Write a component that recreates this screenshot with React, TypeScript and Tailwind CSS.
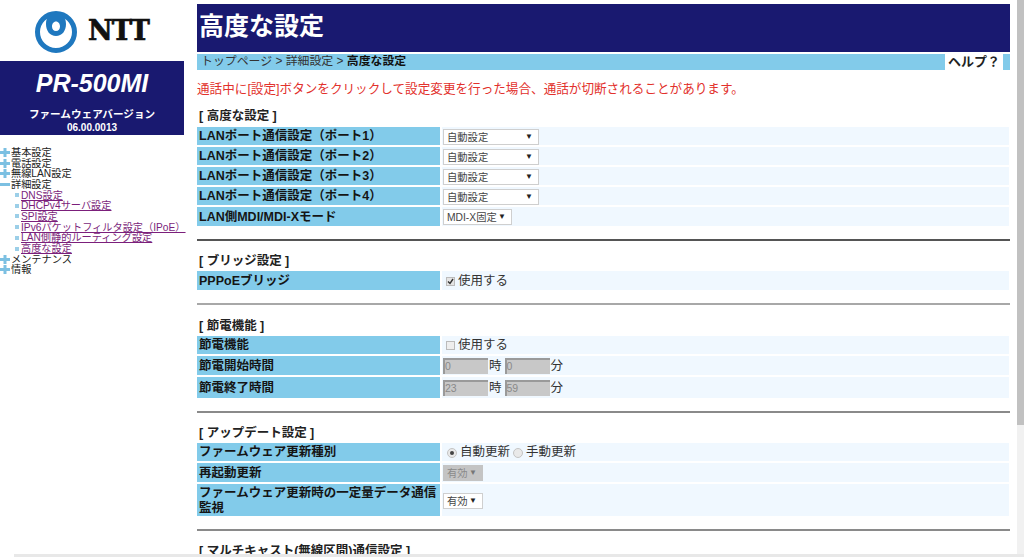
import React from "react";

const jp = { fontFamily: '"Liberation Sans","Noto Sans CJK JP",sans-serif' };

function Plus() {
  return (
    <svg width="10" height="9" viewBox="0 0 10 9" className="shrink-0 mr-[1px]">
      <path d="M3.500 0h3v3H10v3H6.500v3h-3V6H0V3h3.500z" fill="#7cc0e2" />
    </svg>
  );
}
function Minus() {
  return (
    <svg width="10" height="9" viewBox="0 0 10 9" className="shrink-0 mr-[1px]">
      <rect x="0" y="3" width="10" height="3" fill="#7cc0e2" />
    </svg>
  );
}

function TreeTop({ open, children }: { open?: boolean; children: React.ReactNode }) {
  return (
    <div className="flex items-center h-[10.7px] text-[10.2px] leading-[11px] text-[#222]">
      {open ? <Minus /> : <Plus />}
      <span>{children}</span>
    </div>
  );
}
function TreeLink({ children }: { children: React.ReactNode }) {
  return (
    <div className="flex items-center h-[10.7px] pl-[15px] text-[10.2px] leading-[11px] whitespace-nowrap">
      <span className="w-[4px] h-[4px] bg-[#9ccfe8] mr-[2px] shrink-0" />
      <span className="text-[#7b1f7b] underline underline-offset-[1px]">{children}</span>
    </div>
  );
}

function Row({ label, children, h, mb = "mb-[2px]" }: { label: React.ReactNode; children?: React.ReactNode; h: string; mb?: string }) {
  return (
    <div className={`flex ${h} ${mb} mr-[1px]`}>
      <div className="w-[243px] shrink-0 bg-[#82cbea] flex items-center pl-[2px] pt-[1px] text-[12.5px] leading-[15px] font-bold text-[#151515]">
        {label}
      </div>
      <div className="ml-[2px] flex-1 bg-[#f0f8ff] flex items-center pl-[1px] pt-[1px] text-[12.5px] text-[#333]">{children}</div>
    </div>
  );
}

function Sel({ w, children, disabled }: { w: string; children: React.ReactNode; disabled?: boolean }) {
  return (
    <div
      className={`${w} h-[16px] flex items-center justify-between pl-[3px] pr-[5px] text-[10.3px] border ${
        disabled ? "bg-[#c4c4c4] border-[#c4c4c4] text-[#8a8a8a]" : "bg-white border-[#cfcfcf] text-[#444]"
      }`}
    >
      <span className="whitespace-nowrap pt-[2px]">{children}</span>
      <span className={`text-[8px] ${disabled ? "text-[#777]" : "text-[#222]"}`}>▼</span>
    </div>
  );
}

function TimeBox({ v }: { v: string }) {
  return (
    <div className="w-[45px] h-[16px] -mt-[1px] bg-[#c8c8c8] border-t-2 border-l-2 border-t-[#9a9a9a] border-l-[#9a9a9a] text-[10.5px] leading-[13px] text-[#8a8a8a]">
      {v}
    </div>
  );
}

function Title({ children, mt }: { children: React.ReactNode; mt: string }) {
  return <div className={`${mt} h-[14px] pt-[1px] pl-[2px] text-[12.5px] leading-[14px] font-bold text-[#222] whitespace-nowrap`}>{children}</div>;
}

function Rule({ mt, color = "bg-[#8a8a8a]" }: { mt: string; color?: string }) {
  return <div className={`${mt} h-[2px] ${color}`} />;
}

function Tick() {
  return (
    <span className="w-[9px] h-[9px] bg-[#e4e4e4] border border-[#bbb] flex items-center justify-center mr-[3px] ml-[3px]">
      <svg width="7" height="7" viewBox="0 0 7 7"><path d="M1 3.500l2 2 3-4.500" fill="none" stroke="#333" strokeWidth="1.4" /></svg>
    </span>
  );
}

function Radio({ on }: { on?: boolean }) {
  return (
    <span className="w-[10px] h-[10px] rounded-full bg-[#e9e9e9] border border-[#c4c4c4] flex items-center justify-center">
      {on && <span className="w-[4px] h-[4px] rounded-full bg-[#444]" />}
    </span>
  );
}

export default function App() {
  return (
    <div style={jp} className="relative w-[1024px] h-[557px] overflow-hidden bg-white flex">
      <aside className="w-[184px] shrink-0">
        <div className="h-[61px] flex items-center pl-[34px] gap-[10px]">
          <svg width="44" height="44" viewBox="0 0 44 44" className="mt-[3px]">
            <circle cx="22" cy="22" r="18.500" fill="none" stroke="#1f78bf" strokeWidth="5" />
            <path fillRule="evenodd" d="M22 2c6 0 10 5 10 12s-4 12-10 12-10-5-10-12S16 2 22 2zm0 9.500c-2.500 0-4 2.500-4 5s1.500 4.500 4 4.500 4-2 4-4.500-1.500-5-4-5z" fill="#1f78bf" />
          </svg>
          <span style={{ fontFamily: '"DejaVu Serif",serif' }} className="text-[27px] leading-none font-black text-[#111] tracking-[-1px] [-webkit-text-stroke:0.7px_#111]">
            NTT
          </span>
        </div>
        <div className="h-[74px] bg-[#191970] text-white flex flex-col items-center">
          <div className="mt-[8px] text-[25px] leading-[29px] italic font-bold">PR-500MI</div>
          <div className="mt-[9px] text-[10.6px] leading-[14px] font-bold whitespace-nowrap">ファームウェアバージョン</div>
          <div className="text-[10px] leading-[14px] font-bold">06.00.0013</div>
        </div>
        <nav className="mt-[12px]">
          <TreeTop>基本設定</TreeTop>
          <TreeTop>電話設定</TreeTop>
          <TreeTop>無線LAN設定</TreeTop>
          <TreeTop open>詳細設定</TreeTop>
          <TreeLink>DNS設定</TreeLink>
          <TreeLink>DHCPv4サーバ設定</TreeLink>
          <TreeLink>SPI設定</TreeLink>
          <TreeLink>IPv6パケットフィルタ設定（IPoE）</TreeLink>
          <TreeLink>LAN側静的ルーティング設定</TreeLink>
          <TreeLink>高度な設定</TreeLink>
          <TreeTop>メンテナンス</TreeTop>
          <TreeTop>情報</TreeTop>
        </nav>
      </aside>

      <main className="ml-[13px] w-[813px] shrink-0 pt-[4px]">
        <h1 className="h-[48px] bg-[#191970] text-white text-[25px] font-bold flex items-center pl-[2px] pb-[2px]">高度な設定</h1>
        <div className="mt-[2px] h-[16px] bg-[#82cbea] flex items-center text-[11.9px] text-[#333]">
          <div className="flex-1 pl-[4px] whitespace-nowrap">
            トップページ &gt; 詳細設定 &gt; <b className="text-[#111]">高度な設定</b>
          </div>
          <div className="w-[58px] h-full bg-white text-center text-[13px] font-bold leading-[16px] text-[#222] whitespace-nowrap">ヘルプ？</div>
          <div className="w-[7px]" />
        </div>
        <p className="mt-[11px] h-[15px] text-[12.6px] leading-[16px] text-[#e2312c] whitespace-nowrap">
          通話中に[設定]ボタンをクリックして設定変更を行った場合、通話が切断されることがあります。
        </p>

        <Title mt="mt-[12px]">[ 高度な設定 ]</Title>
        <div className="mt-[5px]">
          <Row h="h-[18px]" label="LANポート通信設定（ポート1）"><Sel w="w-[96px]">自動設定</Sel></Row>
          <Row h="h-[18px]" label="LANポート通信設定（ポート2）"><Sel w="w-[96px]">自動設定</Sel></Row>
          <Row h="h-[18px]" label="LANポート通信設定（ポート3）"><Sel w="w-[96px]">自動設定</Sel></Row>
          <Row h="h-[18px]" label="LANポート通信設定（ポート4）"><Sel w="w-[96px]">自動設定</Sel></Row>
          <Row h="h-[19px]" mb="" label="LAN側MDI/MDI-Xモード"><Sel w="w-[69px]">MDI-X固定</Sel></Row>
        </div>
        <Rule mt="mt-[13px]" color="bg-[#555]" />

        <Title mt="mt-[12px]">[ ブリッジ設定 ]</Title>
        <div className="mt-[4px]">
          <Row h="h-[19px]" mb="" label="PPPoEブリッジ">
            <Tick /><span>使用する</span>
          </Row>
        </div>
        <Rule mt="mt-[13px]" color="bg-[#a8a8a8]" />

        <Title mt="mt-[13px]">[ 節電機能 ]</Title>
        <div className="mt-[4px]">
          <Row h="h-[18px]" label="節電機能">
            <span className="w-[9px] h-[9px] bg-[#eee] border border-[#bbb] mr-[3px] ml-[3px]" /><span>使用する</span>
          </Row>
          <Row h="h-[19px]" label="節電開始時間">
            <TimeBox v="0" /><span className="ml-[1px] mr-[3px]">時</span><TimeBox v="0" /><span className="ml-[1px]">分</span>
          </Row>
          <Row h="h-[21px]" mb="" label="節電終了時間">
            <TimeBox v="23" /><span className="ml-[1px] mr-[3px]">時</span><TimeBox v="59" /><span className="ml-[1px]">分</span>
          </Row>
        </div>
        <Rule mt="mt-[13px]" />

        <Title mt="mt-[12px]">[ アップデート設定 ]</Title>
        <div className="mt-[4px]">
          <Row h="h-[18px]" label="ファームウェア更新種別">
            <span className="ml-[4px]"><Radio on /></span>
            <span className="ml-[3px]">自動更新</span>
            <span className="ml-[3px]"><Radio /></span>
            <span className="ml-[3px]">手動更新</span>
          </Row>
          <Row h="h-[19px]" label="再起動更新"><Sel w="w-[40px]" disabled>有効</Sel></Row>
          <Row h="h-[32px]" mb="" label={<span className="w-[240px]">ファームウェア更新時の一定量データ通信監視</span>}>
            <Sel w="w-[40px]">有効</Sel>
          </Row>
        </div>
        <Rule mt="mt-[13px]" />

        <Title mt="mt-[12px]">[ マルチキャスト(無線区間)通信設定 ]</Title>
      </main>

      <div className="ml-auto w-[7px] h-full bg-[#f1f1f1] flex flex-col">
        <div className="h-[425px] bg-[#c1c1c1]" />
      </div>
      <div className="absolute left-0 right-0 bottom-0 h-[3px] bg-[#e8e8e8]">
        <div className="w-[14px] h-full bg-white" />
      </div>
    </div>
  );
}
